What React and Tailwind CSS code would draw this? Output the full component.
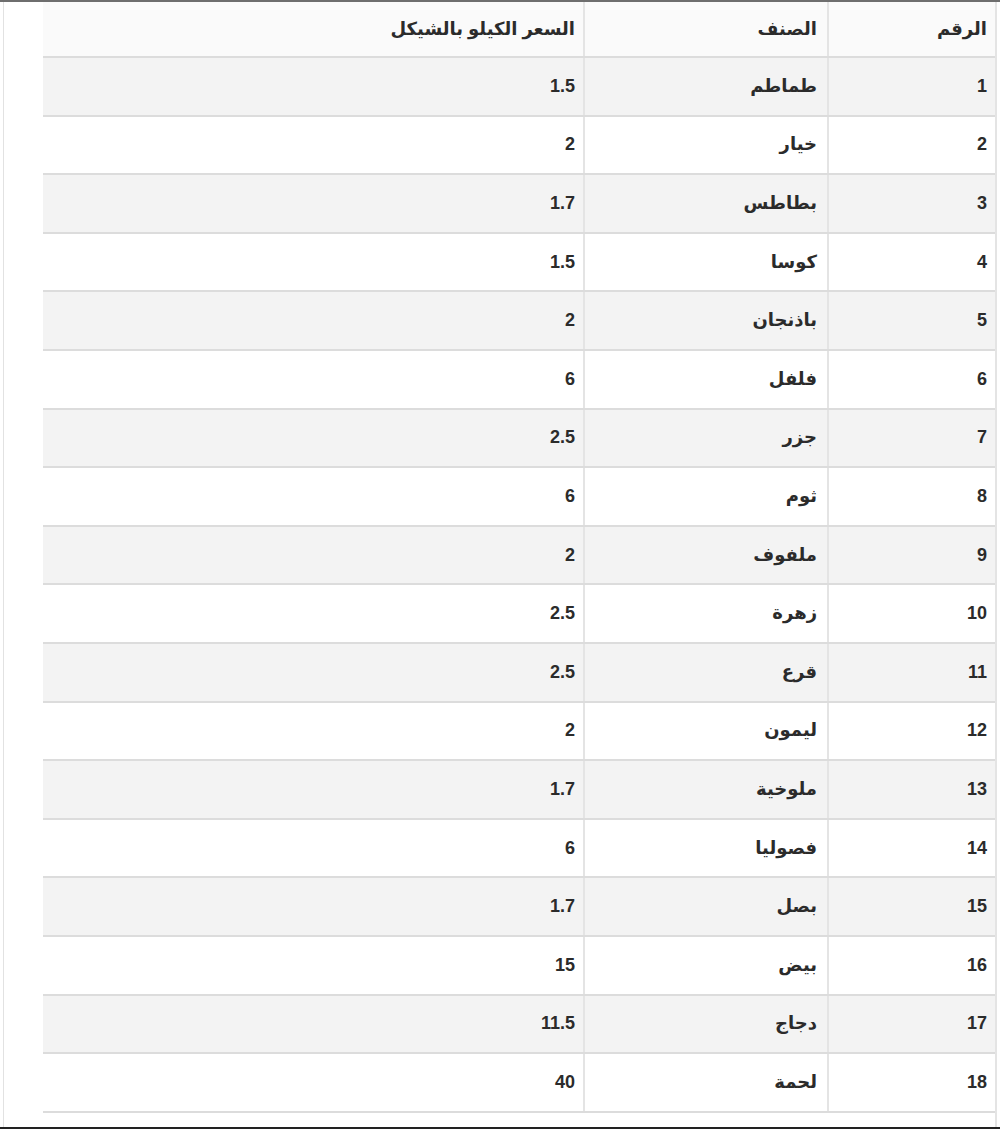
import React from "react";

const rows = [
  ["1", "طماطم", "1.5"],
  ["2", "خيار", "2"],
  ["3", "بطاطس", "1.7"],
  ["4", "كوسا", "1.5"],
  ["5", "باذنجان", "2"],
  ["6", "فلفل", "6"],
  ["7", "جزر", "2.5"],
  ["8", "ثوم", "6"],
  ["9", "ملفوف", "2"],
  ["10", "زهرة", "2.5"],
  ["11", "قرع", "2.5"],
  ["12", "ليمون", "2"],
  ["13", "ملوخية", "1.7"],
  ["14", "فصوليا", "6"],
  ["15", "بصل", "1.7"],
  ["16", "بيض", "15"],
  ["17", "دجاج", "11.5"],
  ["18", "لحمة", "40"],
];

const Row = ({ cells, className }) => (
  <div
    className={
      "grid grid-cols-[168px_244px_1fr] border-b-2 border-[#dcdcdc] " +
      className
    }
  >
    <div className="flex items-center pr-[8px] border-l-2 border-[#e4e4e4]">
      {cells[0]}
    </div>
    <div className="flex items-center pr-[10px] border-l-2 border-[#e4e4e4]">
      {cells[1]}
    </div>
    <div className="flex items-center pr-[8px]">{cells[2]}</div>
  </div>
);

const App = () => {
  return (
    <div
      className="w-[1000px] h-[1129px] bg-white flex flex-col overflow-hidden"
      style={{ fontFamily: '"Liberation Sans", "DejaVu Sans", sans-serif' }}
    >
      {/* top edge */}
      <div className="h-[2px] bg-[#6e6e6e]" />

      <div className="flex-1 flex">
        <div className="ml-[3px] w-[40px] border-l border-[#e2e2e2]" />
        <div
          dir="rtl"
          className="w-[954px] border-r-2 border-[#e4e4e4] text-[18px] font-bold text-[#2b2b2b]"
        >
          <Row
            cells={["الرقم", "الصنف", "السعر الكيلو بالشيكل"]}
            className="h-[56px] bg-[#fafafa]"
          />
          {rows.map((r, i) => (
            <Row
              key={r[0]}
              cells={r}
              className={
                "h-[58.6px] " + (i % 2 === 0 ? "bg-[#f3f3f3]" : "bg-white")
              }
            />
          ))}
        </div>
      </div>

      {/* bottom edge */}
      <div className="h-[2px] bg-[#222]" />
    </div>
  );
};

export default App;
